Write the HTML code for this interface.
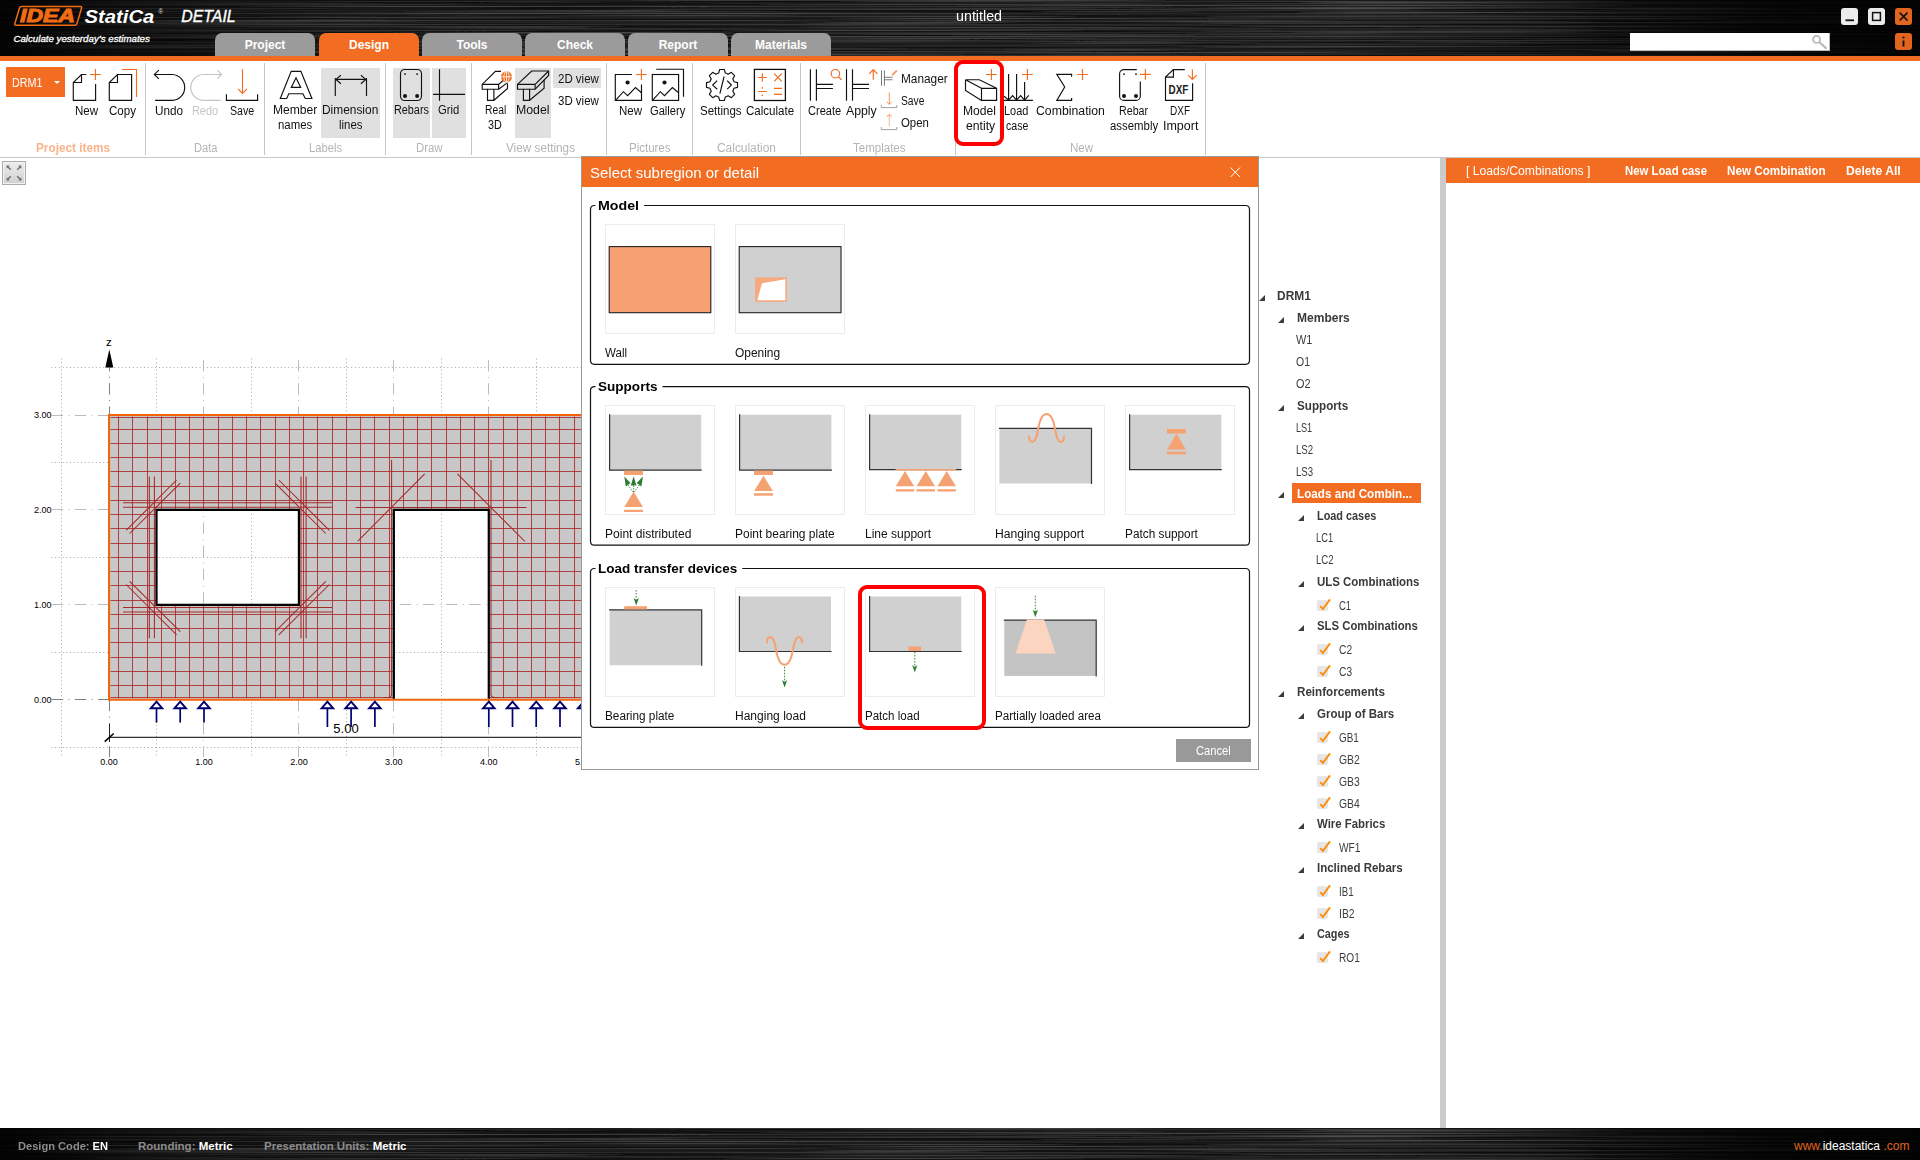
<!DOCTYPE html>
<html lang="en">
<head>
<meta charset="utf-8">
<title>IDEA StatiCa Detail - untitled</title>
<style>
*{box-sizing:border-box;margin:0;padding:0}
html,body{width:1920px;height:1160px;overflow:hidden;background:#fff}
body{font-family:"Liberation Sans",sans-serif;font-size:12px;color:#000;position:relative}
.abs{position:absolute}
#titlebar{position:absolute;left:0;top:0;width:1920px;height:56px;background:#262626;overflow:hidden}
#titlebar .tex,#status .tex{position:absolute;left:0;top:0;width:100%;height:100%;
 background:linear-gradient(90deg,rgba(0,0,0,.92) 0%,rgba(0,0,0,.55) 6%,rgba(0,0,0,.12) 18%,rgba(0,0,0,0) 35%,rgba(0,0,0,0) 70%,rgba(0,0,0,.35) 82%,rgba(0,0,0,.8) 92%,rgba(0,0,0,.92) 100%)}
#orange{position:absolute;left:0;top:56px;width:1920px;height:5px;background:#f26c21}
.tab{position:absolute;top:33px;width:100px;height:23px;background:#9b9b9b;border-radius:7px 7px 0 0;color:#fff;font-weight:bold;font-size:12px;text-align:center;line-height:24px}
.tab.on{background:#f26c21}
#ribbon{position:absolute;left:0;top:61px;width:1920px;height:97px;background:#fff;border-bottom:1px solid #c8c8c8}
.sep{position:absolute;top:63px;width:1px;height:92px;background:#c6c6c6}
.glabel{position:absolute;top:141px;font-size:12px;color:#b4b4b4;white-space:nowrap;transform:translateX(-50%)}
.rl{position:absolute;font-size:12px;white-space:nowrap;transform:translateX(-50%);text-align:center;line-height:15px;color:#111}
.hl{position:absolute;background:#e0e0e0}
svg{position:absolute;overflow:visible}
#status{position:absolute;left:0;top:1128px;width:1920px;height:32px;background:#222;overflow:hidden}
#status span{position:absolute;top:11.8px;font-size:11.5px;white-space:nowrap}
.tree{position:absolute;white-space:nowrap;font-size:12px;color:#333}
.tree.b{font-weight:bold;color:#3a3a3a}
.tri{position:absolute;width:0;height:0;border-left:6px solid transparent;border-bottom:6px solid #3c3c3c}
.cb{position:absolute;width:11px;height:11px;background:#e6e6e6;border-radius:2px}
</style>
</head>
<body>
<svg width="0" height="0" style="position:absolute"><defs><filter id="brush" x="0" y="0" width="100%" height="100%"><feTurbulence type="fractalNoise" baseFrequency="0.0025 0.75" numOctaves="2" seed="7" result="n"/><feColorMatrix in="n" type="matrix" values="0 0 0 0 0  0 0 0 0 0  0 0 0 0 0  -1.8 0 0 0 1.2" result="d"/><feColorMatrix in="n" type="matrix" values="0 0 0 0 1  0 0 0 0 1  0 0 0 0 1  0 0.3 0 0 -0.15" result="l"/><feMerge><feMergeNode in="d"/><feMergeNode in="l"/></feMerge></filter></defs></svg>
<div id="titlebar"><svg style="left:0;top:0" width="1920" height="56"><rect width="1920" height="56" filter="url(#brush)"/></svg><div class="tex"></div>
<svg style="left:0;top:0" width="260" height="56" viewBox="0 0 260 56">
 <path d="M21.6 6.6H80.4Q82 6.6 81.5 8.2L76.9 23.9Q76.5 25.3 75 25.3H16Q14.3 25.3 14.8 23.7L19.5 8Q19.9 6.6 21.6 6.6Z" fill="none" stroke="#f26c14" stroke-width="1.5"/>
 <text x="20" y="22.4" font-family="Liberation Sans, sans-serif" font-weight="bold" font-style="italic" font-size="18" fill="#f26c14" stroke="#f26c14" stroke-width="1.0" textLength="55" lengthAdjust="spacingAndGlyphs">IDEA</text>
 <text x="84.6" y="22.7" font-family="Liberation Sans, sans-serif" font-weight="bold" font-style="italic" font-size="19.2" fill="#fff" textLength="69.8" lengthAdjust="spacingAndGlyphs">StatiCa</text>
 <text x="158.3" y="13.6" font-family="Liberation Sans, sans-serif" font-size="6.5" fill="#ddd">®</text>
 <text x="181.2" y="22" font-family="Liberation Sans, sans-serif" font-style="italic" font-size="16.3" fill="#fff" stroke="#fff" stroke-width="0.35" textLength="54.5" lengthAdjust="spacingAndGlyphs">DETAIL</text>
 <text x="13.4" y="41.6" font-family="Liberation Sans, sans-serif" font-style="italic" font-size="9.2" fill="#fff" stroke="#fff" stroke-width="0.3" textLength="136.5" lengthAdjust="spacingAndGlyphs">Calculate yesterday’s estimates</text>
</svg>
<div class="abs" style="left:955.70px;top:6.60px;font-size:14px;color:#fff;white-space:nowrap;line-height:18px;transform-origin:0 0;transform:scaleX(1.0200);">untitled</div>
</div>
<div class="tab" style="left:215px">Project</div>
<div class="tab on" style="left:319px">Design</div>
<div class="tab" style="left:422px">Tools</div>
<div class="tab" style="left:525px">Check</div>
<div class="tab" style="left:628px">Report</div>
<div class="tab" style="left:731px">Materials</div>
<div id="orange"></div>
<div id="ribbon"></div>
<!-- window buttons / search -->
<div class="abs" style="left:1841px;top:8px;width:17px;height:17px;background:#ececec;border-radius:3px"></div>
<div class="abs" style="left:1868px;top:8px;width:17px;height:17px;background:#ececec;border-radius:3px"></div>
<div class="abs" style="left:1895px;top:8px;width:17px;height:17px;background:#e2651f;border-radius:3px"></div>
<div class="abs" style="left:1895px;top:33px;width:17px;height:17px;background:#e2651f;border-radius:3px"></div>
<div class="abs" style="left:1630px;top:33px;width:200px;height:18px;background:#fff;border-bottom:1px solid #bbb;border-right:1px solid #bbb"></div>
<svg style="left:0;top:0" width="1920" height="160" viewBox="0 0 1920 160" fill="none" stroke-linecap="butt">
 <g stroke="#111" stroke-width="1.8">
  <path d="M1845.5 20.3H1854"/>
  <rect x="1872.6" y="12.6" width="7.8" height="7.8" stroke-width="1.5"/>
  <path d="M1899.7 12.7l7.8 7.8M1907.5 12.7l-7.8 7.8" stroke-width="1.7"/>
  <path d="M1903.5 40.5v6" stroke-width="1.9"/><path d="M1903.5 36.6v1.9" stroke-width="1.9"/>
 </g>
 <g stroke="#b8b8b8" stroke-width="1.8"><circle cx="1816.6" cy="39.4" r="3.5"/><path d="M1819.2 42l7.3 6.6" stroke-width="2.2"/></g>
</svg>
<!-- highlights -->
<div class="hl" style="left:321px;top:68px;width:59px;height:70px"></div>
<div class="hl" style="left:393px;top:68px;width:37px;height:70px"></div>
<div class="hl" style="left:432px;top:68px;width:34px;height:70px"></div>
<div class="hl" style="left:515px;top:68px;width:36px;height:70px"></div>
<div class="hl" style="left:553px;top:68px;width:48px;height:20px"></div>
<!-- separators -->
<div class="sep" style="left:145px"></div><div class="sep" style="left:264px"></div><div class="sep" style="left:385px"></div>
<div class="sep" style="left:471px"></div><div class="sep" style="left:606px"></div><div class="sep" style="left:692px"></div>
<div class="sep" style="left:800px"></div><div class="sep" style="left:955px"></div><div class="sep" style="left:1205px"></div>
<!-- DRM1 combo -->
<div class="abs" style="left:6px;top:67px;width:59px;height:30px;background:#f26c21"></div>
<div class="abs" style="left:12.20px;top:74.80px;font-size:12.5px;color:#fff;white-space:nowrap;line-height:16px;transform-origin:0 0;transform:scaleX(0.8600);">DRM1</div>
<div class="abs" style="left:54.4px;top:80.8px;width:0;height:0;border-left:3.1px solid transparent;border-right:3.1px solid transparent;border-top:3.4px solid #fff"></div>
<svg style="left:0;top:0" width="1920" height="160" viewBox="0 0 1920 160" fill="none" stroke="#111" stroke-width="1.15" stroke-linejoin="miter">
 <!-- New doc -->
 <path d="M86.3 74.5H81.5L73.3 82.5V100.4H95.6V84"/><path d="M81.5 74.5V82.5H73.3"/>
 <path d="M95.4 69.1v10.8M90 74.5h10.8" stroke="#f26c21"/>
 <!-- Copy -->
 <path d="M117.5 74.5H131.6V100.4H109.3V82.5Z"/><path d="M117.5 74.5V82.5H109.3"/>
 <path d="M122 69.5H136.5V96.9" stroke="#f26c21"/>
 <!-- Undo -->
 <path d="M154.3 74.45H172.5A13 13 0 0 1 172.5 100.4H155.1"/><path d="M158.9 70.1L154.3 74.45L158.9 78.8"/>
 <!-- Redo -->
 <g stroke="#c4c4c4"><path d="M221.6 74.45H203A13 13 0 0 0 203 100.4H220.8"/><path d="M217.2 70.1L221.6 74.45L217.2 78.8"/></g>
 <!-- Save -->
 <path d="M226.4 94.2V100.4H257.6V94.2"/>
 <g stroke="#f26c21"><path d="M242.5 69.1V93.3"/><path d="M238 88.8L242.5 93.4L247 88.8"/></g>
 <!-- A -->
 <path d="M291.2 71.4H300.9L311.9 98.5H305.3L302.9 93.7H288.8L286.7 98.5H280.3Z"/><path d="M296 77.8L300.7 87.4H291.3Z"/>
 <!-- Dimension -->
 <path d="M335.3 78V96M366.5 78V96M335.6 79.4H366.2"/><path d="M340.9 75.2L336 79.4L340.9 83.7M360.9 75.2L365.8 79.4L360.9 83.7"/>
 <!-- Rebars -->
 <rect x="400.5" y="69.5" width="21" height="31" rx="4.2"/>
 <g fill="#111" stroke="none"><circle cx="405" cy="74.1" r="0.95"/><circle cx="417.1" cy="74.1" r="0.95"/><circle cx="405" cy="95.9" r="2"/><circle cx="417.1" cy="95.9" r="2"/></g>
 <!-- Grid -->
 <path d="M439.5 69.3V100.7M433.1 94.3H465"/>
 <!-- Real 3D -->
 <path d="M501 71.3H495.4L482.2 84.4V89.2H487.5V100.3H493.9L507.5 88.5V83.4"/><path d="M482.2 84.4H498.6V89.2H493.9V100.3M487.5 89.2H493.9"/><path d="M498.6 84.4L503.5 80.2M498.6 89.2L507.5 82.6"/>
 <circle cx="506.5" cy="76.8" r="5.5" fill="#f26c21" stroke="none"/>
 <g stroke="#fff" stroke-width="0.8"><path d="M501 76.8H512M506.5 71.3V82.3"/><ellipse cx="506.5" cy="76.8" rx="2.6" ry="5.4"/></g>
 <!-- Model -->
 <path d="M517.5 84.4L531.7 71H548.6V75.4L535.1 89.2H529.6V100.3H523.4V89.2H517.5Z"/><path d="M517.5 84.4H535.1V89.2M535.1 84.4L548.6 71M523.4 89.2H529.6"/><path d="M529.6 100.3L544.1 88.2V80"/>
 <!-- New picture -->
 <path d="M631.9 74.5H615.3V100.4H641.5V84.4"/><path d="M616 99.8L623.4 91.7L627.6 95.7L635.5 87.5L641.5 92.7"/>
 <circle cx="627.6" cy="82.5" r="2.1" fill="#111" stroke="none"/>
 <path d="M641.4 69.1v10.8M636 74.5h10.8" stroke="#f26c21"/>
 <!-- Gallery -->
 <rect x="652.3" y="74.5" width="26.3" height="25.9"/><path d="M653 99.8L660.3 91.7L664.5 95.7L672.4 87.5L678.6 92.7"/>
 <circle cx="664.5" cy="82.5" r="2.1" fill="#111" stroke="none"/>
 <path d="M656.2 69.2H683.5V96.8"/>
 <!-- Settings gear -->
 <path d="M718.69 73.05L719.65 69.48L724.35 69.48L725.31 73.05A12.4 12.4 0 0 1 728.11 74.21L728.11 74.21L731.32 72.36L734.64 75.68L732.79 78.89A12.4 12.4 0 0 1 733.95 81.69L733.95 81.69L737.52 82.65L737.52 87.35L733.95 88.31A12.4 12.4 0 0 1 732.79 91.11L732.79 91.11L734.64 94.32L731.32 97.64L728.11 95.79A12.4 12.4 0 0 1 725.31 96.95L725.31 96.95L724.35 100.52L719.65 100.52L718.69 96.95A12.4 12.4 0 0 1 715.89 95.79L715.89 95.79L712.68 97.64L709.36 94.32L711.21 91.11A12.4 12.4 0 0 1 710.05 88.31L710.05 88.31L706.48 87.35L706.48 82.65L710.05 81.69A12.4 12.4 0 0 1 711.21 78.89L711.21 78.89L709.36 75.68L712.68 72.36L715.89 74.21A12.4 12.4 0 0 1 718.69 73.05Z" stroke-linejoin="round"/>
 <path d="M717.2 80.6L712.7 85.1L717.2 89.2M724.1 76.5L719.9 93.7M727.2 80.6L731.4 85.1L727.2 89.2"/>
 <!-- Calculate -->
 <rect x="754.4" y="69.4" width="31" height="31.1" stroke-width="1.3"/>
 <g stroke="#f26c21"><path d="M762.3 73.2v8.6M758 77.5h8.6M774.2 73.7l7.6 7.6M781.8 73.7l-7.6 7.6M758.2 91.5h8.6M774 88.3h8M774 94.3h8"/>
 <circle cx="762.3" cy="87.9" r="0.8" fill="#f26c21" stroke="none"/><circle cx="762.3" cy="95.4" r="0.8" fill="#f26c21" stroke="none"/></g>
 <!-- Create -->
 <path d="M810.4 69.3V100.75M816.4 69.3V100.75M816.4 84.3H832.9M816.4 88.5H832.9"/>
 <g stroke="#f26c21"><circle cx="835.4" cy="73.7" r="4.2"/><path d="M838.3 76.7L841.7 79.7"/></g>
 <!-- Apply -->
 <path d="M846.5 69.3V100.75M852.5 69.3V100.75M852.5 84.3H869M852.5 88.5H869"/>
 <g stroke="#f26c21"><path d="M873.3 69.6V79.8M869.2 73.8L873.3 69.6L877.4 73.8"/></g>
 <!-- Manager/Save/Open small -->
 <g stroke="#555" stroke-width="0.8"><path d="M881.5 70.3V85.75M884.4 70.3V85.75M884.4 77.25H892.5M884.4 79.75H892.5"/></g>
 <path d="M892.6 74.6L896.3 71.2" stroke="#f26c21" stroke-width="1.6" stroke-linecap="round"/><path d="M892.6 74.6L896.3 71.2" stroke="#fff" stroke-width="0.5" stroke-linecap="round"/>
 <g stroke="#888" stroke-width="0.8"><path d="M881.3 105V107.6H896.8V105M881.3 127V129.6H896.8V127"/></g>
 <g stroke="#f58a4e" stroke-width="0.9"><path d="M889.3 92.4V104.3M886.8 101.8L889.3 104.4L891.8 101.8"/></g>
 <g stroke="#f9b896" stroke-width="1.1"><path d="M889.3 126.2V114.4M886.8 116.9L889.3 114.3L891.8 116.9"/></g>
 <!-- Model entity -->
 <path d="M981.5 88.3H996.6V100.4H981.5ZM965.5 79.7H979.3L996.6 88.3M965.5 79.7L981.5 88.3M965.5 79.7V90.5L981.5 100.4"/>
 <path d="M991.4 69.1v10.8M986 74.5h10.8" stroke="#f26c21"/>
 <!-- Load case -->
 <path d="M1008.6 74.1V100.4M1016.6 74.1V100.4M1024.6 81.9V100.4M1003.9 100.4H1032.9"/><path d="M1004.2 96.2L1008.6 100.2L1012.6 95.7L1016.6 100.2L1020.6 95.7L1024.6 100.2L1028.8 95.3"/>
 <path d="M1027.4 69.1v10.8M1022 74.5h10.8" stroke="#f26c21"/>
 <!-- Sigma -->
 <path d="M1071.6 76.8V74.3H1056.8L1064.7 87L1056.8 100.4H1071.6V97.9"/>
 <path d="M1082.5 69.1v10.8M1077.1 74.5h10.8" stroke="#f26c21"/>
 <!-- Rebar assembly -->
 <path d="M1136.8 69.6H1123.8A4.2 4.2 0 0 0 1119.6 73.8V96.2A4.2 4.2 0 0 0 1123.8 100.4H1136.1A4.2 4.2 0 0 0 1140.3 96.2V81.4"/>
 <g fill="#111" stroke="none"><circle cx="1124" cy="74.1" r="0.95"/><circle cx="1136" cy="74.1" r="0.95"/><circle cx="1124" cy="96.1" r="2"/><circle cx="1136" cy="96.1" r="2"/></g>
 <path d="M1145.4 69v10.8M1140 74.4h10.8" stroke="#f26c21"/>
 <!-- DXF -->
 <path d="M1184.8 69.6H1173.4L1165.5 77.1V100.4H1192.6V83.2"/><path d="M1173.4 69.6V77.1H1165.5"/>
 <text x="1168.6" y="93.5" font-family="Liberation Sans, sans-serif" font-weight="bold" font-size="13.5" fill="#222" stroke="none" textLength="19.8" lengthAdjust="spacingAndGlyphs">DXF</text>
 <g stroke="#f26c21"><path d="M1192.4 69.4V79.3M1188.1 75.1L1192.4 79.4L1196.7 75.1"/></g>
</svg>
<div class="abs" style="left:75.30px;top:103.70px;font-size:12px;color:#111;white-space:nowrap;line-height:15px;transform-origin:0 0;transform:scaleX(0.9627);">New</div>
<div class="abs" style="left:109.30px;top:103.70px;font-size:12px;color:#111;white-space:nowrap;line-height:15px;transform-origin:0 0;transform:scaleX(0.9639);">Copy</div>
<div class="abs" style="left:155.00px;top:103.70px;font-size:12px;color:#111;white-space:nowrap;line-height:15px;transform-origin:0 0;transform:scaleX(0.9780);">Undo</div>
<div class="abs" style="left:192.00px;top:103.70px;font-size:12px;color:#c6c6c6;white-space:nowrap;line-height:15px;transform-origin:0 0;transform:scaleX(0.9049);">Redo</div>
<div class="abs" style="left:229.60px;top:103.70px;font-size:12px;color:#111;white-space:nowrap;line-height:15px;transform-origin:0 0;transform:scaleX(0.8869);">Save</div>
<div class="abs" style="left:272.90px;top:102.70px;font-size:12px;color:#111;white-space:nowrap;line-height:15px;transform-origin:0 0;transform:scaleX(1.0075);">Member</div>
<div class="abs" style="left:278.20px;top:117.70px;font-size:12px;color:#111;white-space:nowrap;line-height:15px;transform-origin:0 0;transform:scaleX(0.9496);">names</div>
<div class="abs" style="left:321.90px;top:102.70px;font-size:12px;color:#111;white-space:nowrap;line-height:15px;transform-origin:0 0;transform:scaleX(0.9924);">Dimension</div>
<div class="abs" style="left:338.80px;top:117.70px;font-size:12px;color:#111;white-space:nowrap;line-height:15px;transform-origin:0 0;transform:scaleX(0.9522);">lines</div>
<div class="abs" style="left:393.80px;top:102.70px;font-size:12px;color:#111;white-space:nowrap;line-height:15px;transform-origin:0 0;transform:scaleX(0.9022);">Rebars</div>
<div class="abs" style="left:438.10px;top:102.70px;font-size:12px;color:#111;white-space:nowrap;line-height:15px;transform-origin:0 0;transform:scaleX(0.9377);">Grid</div>
<div class="abs" style="left:484.90px;top:102.70px;font-size:12px;color:#111;white-space:nowrap;line-height:15px;transform-origin:0 0;transform:scaleX(0.8600);">Real</div>
<div class="abs" style="left:488.40px;top:117.70px;font-size:12px;color:#111;white-space:nowrap;line-height:15px;transform-origin:0 0;transform:scaleX(0.9012);">3D</div>
<div class="abs" style="left:516.00px;top:102.70px;font-size:12px;color:#111;white-space:nowrap;line-height:15px;transform-origin:0 0;transform:scaleX(1.0259);">Model</div>
<div class="abs" style="left:619.30px;top:103.70px;font-size:12px;color:#111;white-space:nowrap;line-height:15px;transform-origin:0 0;transform:scaleX(0.9585);">New</div>
<div class="abs" style="left:650.20px;top:103.70px;font-size:12px;color:#111;white-space:nowrap;line-height:15px;transform-origin:0 0;transform:scaleX(0.9287);">Gallery</div>
<div class="abs" style="left:699.90px;top:103.70px;font-size:12px;color:#111;white-space:nowrap;line-height:15px;transform-origin:0 0;transform:scaleX(0.9595);">Settings</div>
<div class="abs" style="left:745.50px;top:103.70px;font-size:12px;color:#111;white-space:nowrap;line-height:15px;transform-origin:0 0;transform:scaleX(0.9626);">Calculate</div>
<div class="abs" style="left:808.30px;top:103.70px;font-size:12px;color:#111;white-space:nowrap;line-height:15px;transform-origin:0 0;transform:scaleX(0.9206);">Create</div>
<div class="abs" style="left:845.80px;top:103.70px;font-size:12px;color:#111;white-space:nowrap;line-height:15px;transform-origin:0 0;transform:scaleX(1.0228);">Apply</div>
<div class="abs" style="left:963.20px;top:103.70px;font-size:12px;color:#111;white-space:nowrap;line-height:15px;transform-origin:0 0;transform:scaleX(1.0106);">Model</div>
<div class="abs" style="left:966.20px;top:118.70px;font-size:12px;color:#111;white-space:nowrap;line-height:15px;transform-origin:0 0;transform:scaleX(1.0146);">entity</div>
<div class="abs" style="left:1004.30px;top:103.70px;font-size:12px;color:#111;white-space:nowrap;line-height:15px;transform-origin:0 0;transform:scaleX(0.9125);">Load</div>
<div class="abs" style="left:1006.10px;top:118.70px;font-size:12px;color:#111;white-space:nowrap;line-height:15px;transform-origin:0 0;transform:scaleX(0.8821);">case</div>
<div class="abs" style="left:1036.20px;top:103.70px;font-size:12px;color:#111;white-space:nowrap;line-height:15px;transform-origin:0 0;transform:scaleX(1.0235);">Combination</div>
<div class="abs" style="left:1119.40px;top:103.70px;font-size:12px;color:#111;white-space:nowrap;line-height:15px;transform-origin:0 0;transform:scaleX(0.8914);">Rebar</div>
<div class="abs" style="left:1110.10px;top:118.70px;font-size:12px;color:#111;white-space:nowrap;line-height:15px;transform-origin:0 0;transform:scaleX(0.9491);">assembly</div>
<div class="abs" style="left:1170.30px;top:103.70px;font-size:12px;color:#111;white-space:nowrap;line-height:15px;transform-origin:0 0;transform:scaleX(0.8337);">DXF</div>
<div class="abs" style="left:1163.10px;top:118.70px;font-size:12px;color:#111;white-space:nowrap;line-height:15px;transform-origin:0 0;transform:scaleX(1.0402);">Import</div>
<div class="abs" style="left:901.10px;top:71.90px;font-size:12px;color:#111;white-space:nowrap;line-height:15px;transform-origin:0 0;transform:scaleX(0.9869);">Manager</div>
<div class="abs" style="left:901.10px;top:94.10px;font-size:12px;color:#111;white-space:nowrap;line-height:15px;transform-origin:0 0;transform:scaleX(0.8577);">Save</div>
<div class="abs" style="left:901.10px;top:116.10px;font-size:12px;color:#111;white-space:nowrap;line-height:15px;transform-origin:0 0;transform:scaleX(0.9490);">Open</div>
<div class="abs" style="left:557.50px;top:71.90px;font-size:12px;color:#111;white-space:nowrap;line-height:15px;transform-origin:0 0;transform:scaleX(0.9562);">2D view</div>
<div class="abs" style="left:557.50px;top:94.00px;font-size:12px;color:#111;white-space:nowrap;line-height:15px;transform-origin:0 0;transform:scaleX(0.9562);">3D view</div>
<div class="abs" style="left:35.60px;top:140.60px;font-size:12px;color:#f9b48c;white-space:nowrap;line-height:15px;transform-origin:0 0;transform:scaleX(0.9813);font-weight:bold;">Project items</div>
<div class="abs" style="left:193.90px;top:140.60px;font-size:12px;color:#b4b4b4;white-space:nowrap;line-height:15px;transform-origin:0 0;transform:scaleX(0.9215);">Data</div>
<div class="abs" style="left:308.90px;top:140.60px;font-size:12px;color:#b4b4b4;white-space:nowrap;line-height:15px;transform-origin:0 0;transform:scaleX(0.9333);">Labels</div>
<div class="abs" style="left:416.30px;top:140.60px;font-size:12px;color:#b4b4b4;white-space:nowrap;line-height:15px;transform-origin:0 0;transform:scaleX(0.9468);">Draw</div>
<div class="abs" style="left:505.60px;top:140.60px;font-size:12px;color:#b4b4b4;white-space:nowrap;line-height:15px;transform-origin:0 0;transform:scaleX(0.9790);">View settings</div>
<div class="abs" style="left:629.00px;top:140.60px;font-size:12px;color:#b4b4b4;white-space:nowrap;line-height:15px;transform-origin:0 0;transform:scaleX(0.9574);">Pictures</div>
<div class="abs" style="left:717.20px;top:140.60px;font-size:12px;color:#b4b4b4;white-space:nowrap;line-height:15px;transform-origin:0 0;transform:scaleX(0.9931);">Calculation</div>
<div class="abs" style="left:853.10px;top:140.60px;font-size:12px;color:#b4b4b4;white-space:nowrap;line-height:15px;transform-origin:0 0;transform:scaleX(0.9600);">Templates</div>
<div class="abs" style="left:1070.30px;top:140.60px;font-size:12px;color:#b4b4b4;white-space:nowrap;line-height:15px;transform-origin:0 0;transform:scaleX(0.9585);">New</div>
<div class="abs" style="left:2px;top:161px;width:24px;height:24px;border:1px solid #ababab;background:linear-gradient(#eeeeee,#d0d0d0);box-shadow:inset 0 0 0 1px #f2f2f2"></div>
<svg style="left:0;top:158px" width="1440" height="970" viewBox="0 158 1440 970" fill="none">
<g stroke="#6a6a6a" stroke-width="1.3" fill="#6a6a6a">
<path d="M10.8 169.8L7.2 166.2" />
<path d="M6.6 165.6L9.8 165.6L6.6 168.8Z" stroke="none"/>
<path d="M17.2 169.8L20.8 166.2" />
<path d="M21.4 165.6L18.2 165.6L21.4 168.8Z" stroke="none"/>
<path d="M10.8 176.2L7.2 179.8" />
<path d="M6.6 180.4L9.8 180.4L6.6 177.2Z" stroke="none"/>
<path d="M17.2 176.2L20.8 179.8" />
<path d="M21.4 180.4L18.2 180.4L21.4 177.2Z" stroke="none"/>
</g>
<defs><clipPath id="cv"><rect x="0" y="158" width="581" height="970"/></clipPath>
<clipPath id="wc"><path clip-rule="evenodd" d="M109.05 415.01H583.70V699.80H109.05Z M156.51 509.94H298.91V604.87H156.51Z M393.84 509.94H488.77V699.80H393.84Z"/></clipPath></defs>
<g clip-path="url(#cv)">
<g stroke="#a6a6a6" stroke-width="1" stroke-dasharray="1 2.7">
<path d="M61.50 358.5V757.5"/>
<path d="M156.50 358.5V757.5"/>
<path d="M251.50 358.5V757.5"/>
<path d="M346.50 358.5V757.5"/>
<path d="M441.50 358.5V757.5"/>
<path d="M536.50 358.5V757.5"/>
<path d="M631.50 358.5V757.5"/>
<path d="M51.5 747.50H640"/>
<path d="M51.5 652.50H640"/>
<path d="M51.5 557.50H640"/>
<path d="M51.5 462.50H640"/>
<path d="M51.5 367.50H640"/>
</g>
<g stroke="#bcbcbc" stroke-width="1" stroke-dasharray="11.35 5.5 1 5.35">
<path d="M203.50 360.05V699"/><path d="M203.50 699.8V757"/>
<path d="M298.50 360.05V699"/><path d="M298.50 699.8V757"/>
<path d="M393.50 360.05V699"/><path d="M393.50 699.8V757"/>
<path d="M488.50 360.05V699"/><path d="M488.50 699.8V757"/>
<path d="M583.50 360.05V699"/><path d="M583.50 699.8V757"/>
<path d="M51.7 604.50H640"/>
<path d="M51.7 509.50H640"/>
<path d="M51.7 415.50H640"/>
</g>
<g stroke="#808080" stroke-width="1" stroke-dasharray="11.35 5.5 1 5.35">
<path d="M109.5 367.5V414" stroke-dashoffset="7.45"/><path d="M109.5 699.8V757"/>
<path d="M51.7 699.5H640"/>
</g>
<path fill-rule="evenodd" fill="#c8c8c8" d="M109.05 415.01H583.70V699.80H109.05Z M156.51 509.94H298.91V604.87H156.51Z M393.84 509.94H488.77V699.80H393.84Z"/>
<g clip-path="url(#wc)" stroke="#a82828" stroke-opacity="0.85" stroke-width="1">
<path d="M118.50 416.51V698.30"/>
<path d="M132.50 416.51V698.30"/>
<path d="M147.50 416.51V698.30"/>
<path d="M161.50 416.51V698.30"/>
<path d="M175.50 416.51V698.30"/>
<path d="M189.50 416.51V698.30"/>
<path d="M203.50 416.51V698.30"/>
<path d="M218.50 416.51V698.30"/>
<path d="M232.50 416.51V698.30"/>
<path d="M246.50 416.51V698.30"/>
<path d="M260.50 416.51V698.30"/>
<path d="M275.50 416.51V698.30"/>
<path d="M289.50 416.51V698.30"/>
<path d="M303.50 416.51V698.30"/>
<path d="M317.50 416.51V698.30"/>
<path d="M332.50 416.51V698.30"/>
<path d="M346.50 416.51V698.30"/>
<path d="M360.50 416.51V698.30"/>
<path d="M374.50 416.51V698.30"/>
<path d="M389.50 416.51V698.30"/>
<path d="M403.50 416.51V698.30"/>
<path d="M417.50 416.51V698.30"/>
<path d="M431.50 416.51V698.30"/>
<path d="M446.50 416.51V698.30"/>
<path d="M460.50 416.51V698.30"/>
<path d="M474.50 416.51V698.30"/>
<path d="M488.50 416.51V698.30"/>
<path d="M503.50 416.51V698.30"/>
<path d="M517.50 416.51V698.30"/>
<path d="M531.50 416.51V698.30"/>
<path d="M545.50 416.51V698.30"/>
<path d="M559.50 416.51V698.30"/>
<path d="M574.50 416.51V698.30"/>
<path d="M110.55 685.50H582.20"/>
<path d="M110.55 671.50H582.20"/>
<path d="M110.55 657.50H582.20"/>
<path d="M110.55 642.50H582.20"/>
<path d="M110.55 628.50H582.20"/>
<path d="M110.55 614.50H582.20"/>
<path d="M110.55 600.50H582.20"/>
<path d="M110.55 585.50H582.20"/>
<path d="M110.55 571.50H582.20"/>
<path d="M110.55 557.50H582.20"/>
<path d="M110.55 543.50H582.20"/>
<path d="M110.55 528.50H582.20"/>
<path d="M110.55 514.50H582.20"/>
<path d="M110.55 500.50H582.20"/>
<path d="M110.55 486.50H582.20"/>
<path d="M110.55 471.50H582.20"/>
<path d="M110.55 457.50H582.20"/>
<path d="M110.55 443.50H582.20"/>
<path d="M110.55 429.50H582.20"/>
<path d="M110.55 417.5H583.70M110.55 697.5H583.70"/>
</g>
<g stroke="#a52a2a" stroke-width="1.05">
<path d="M123 502.8H332M123 612.0H332"/>
<path d="M123 507.3H332M123 607.5H332"/>
<path d="M149.3 476.5V638.3M306.1 476.5V638.3"/>
<path d="M154.4 476.5V638.3M301.0 476.5V638.3"/>
<path d="M126.1 530.3L176.6 480.0"/>
<path d="M329.3 530.3L278.8 480.0"/>
<path d="M126.1 584.5L176.6 634.8"/>
<path d="M329.3 584.5L278.8 634.8"/>
<path d="M129.6 533.5L180.3 483.2"/>
<path d="M325.8 533.5L275.1 483.2"/>
<path d="M129.6 581.3L180.3 631.6"/>
<path d="M325.8 581.3L275.1 631.6"/>
<path d="M355.5 507.5H526.6"/>
<path d="M391.6 460V694Q391.6 697.5 388 697.5H384"/>
<path d="M491 460V694Q491 697.5 494.6 697.5H498"/>
<path d="M357.8 541.1L424.7 473.9M457.4 473.9L524.9 541.5"/>
</g>
<path fill="none" stroke="#f5640a" stroke-width="2.1" d="M109.05 415.01H583.70V699.80H109.05Z"/>
<path fill="none" stroke="#000" stroke-width="2.2" d="M156.51 509.94H298.91V604.87H156.51Z"/>
<path fill="none" stroke="#000" stroke-width="2.2" d="M393.84 698.80V509.94H488.77V698.80"/>
<path d="M109.3 349.4L113.3 367.5H105.3Z" fill="#000"/>
<text x="106" y="345.8" font-family="Liberation Sans, sans-serif" font-size="11.5" fill="#000">z</text>
<g font-family="Liberation Sans, sans-serif" font-size="9" fill="#000">
<text x="51.5" y="418.2" text-anchor="end">3.00</text>
<text x="51.5" y="513.1" text-anchor="end">2.00</text>
<text x="51.5" y="608.1" text-anchor="end">1.00</text>
<text x="51.5" y="703.0" text-anchor="end">0.00</text>
<text x="109.0" y="764.8" text-anchor="middle">0.00</text>
<text x="204.0" y="764.8" text-anchor="middle">1.00</text>
<text x="298.9" y="764.8" text-anchor="middle">2.00</text>
<text x="393.8" y="764.8" text-anchor="middle">3.00</text>
<text x="488.8" y="764.8" text-anchor="middle">4.00</text>
<text x="583.7" y="764.8" text-anchor="middle">5.00</text>
</g>
<g stroke="#00006e" stroke-width="1.9" fill="#fff">
<path d="M156.5 708.5V722.6" stroke-width="1.7"/><path d="M156.5 701.6L162.3 708.3H150.7Z"/>
<path d="M180.2 708.5V722.6" stroke-width="1.7"/><path d="M180.2 701.6L186.0 708.3H174.4Z"/>
<path d="M204.0 708.5V722.6" stroke-width="1.7"/><path d="M204.0 701.6L209.8 708.3H198.2Z"/>
<path d="M327.4 708.5V727.0" stroke-width="1.7"/><path d="M327.4 701.6L333.2 708.3H321.6Z"/>
<path d="M351.1 708.5V727.0" stroke-width="1.7"/><path d="M351.1 701.6L356.9 708.3H345.3Z"/>
<path d="M374.9 708.5V727.0" stroke-width="1.7"/><path d="M374.9 701.6L380.7 708.3H369.1Z"/>
<path d="M488.8 708.5V727.0" stroke-width="1.7"/><path d="M488.8 701.6L494.6 708.3H483.0Z"/>
<path d="M512.5 708.5V727.0" stroke-width="1.7"/><path d="M512.5 701.6L518.3 708.3H506.7Z"/>
<path d="M536.2 708.5V727.0" stroke-width="1.7"/><path d="M536.2 701.6L542.0 708.3H530.4Z"/>
<path d="M560.0 708.5V727.0" stroke-width="1.7"/><path d="M560.0 701.6L565.8 708.3H554.2Z"/>
<path d="M583.7 708.5V727.0" stroke-width="1.7"/><path d="M583.7 701.6L589.5 708.3H577.9Z"/>
</g>
<path d="M109.3 737.3H583" stroke="#000" stroke-width="1"/>
<path d="M109.5 724V742" stroke="#222" stroke-width="1"/>
<path d="M104.7 741.7L113.7 733.5" stroke="#000" stroke-width="1.6"/>
<text x="346" y="732.8" font-family="Liberation Sans, sans-serif" font-size="13" fill="#000" text-anchor="middle">5.00</text>
</g></svg>
<div class="abs" style="left:581px;top:156px;width:678px;height:614px;background:#fff;border:1px solid #9a9a9a"></div>
<div class="abs" style="left:582px;top:157px;width:676px;height:30px;background:#f26c21"></div>
<div class="abs" style="left:590.40px;top:162.90px;font-size:15px;color:#fff;white-space:nowrap;line-height:19px;transform-origin:0 0;transform:scaleX(0.9987);">Select subregion or detail</div>
<svg style="left:1229px;top:166px" width="13" height="13" viewBox="0 0 13 13"><path d="M1.5 1.5L11 11M11 1.5L1.5 11" stroke="#fff" stroke-width="1"/></svg>
<svg style="left:0;top:0" width="1920" height="1160" viewBox="0 0 1920 1160"><path d="M595.5 205.5H594.5Q590.5 205.5 590.5 209.5V360.3Q590.5 364.3 594.5 364.3H1245.5Q1249.5 364.3 1249.5 360.3V209.5Q1249.5 205.5 1245.5 205.5H644.1" fill="none" stroke="#111" stroke-width="1.2"/></svg>
<div class="abs" style="left:598.30px;top:197.70px;font-size:13px;color:#000;white-space:nowrap;line-height:16px;transform-origin:0 0;transform:scaleX(1.0937);font-weight:bold;">Model</div>
<svg style="left:0;top:0" width="1920" height="1160" viewBox="0 0 1920 1160"><path d="M595.5 386.7H594.5Q590.5 386.7 590.5 390.7V541.2Q590.5 545.2 594.5 545.2H1245.5Q1249.5 545.2 1249.5 541.2V390.7Q1249.5 386.7 1245.5 386.7H662.5" fill="none" stroke="#111" stroke-width="1.2"/></svg>
<div class="abs" style="left:598.30px;top:378.90px;font-size:13px;color:#000;white-space:nowrap;line-height:16px;transform-origin:0 0;transform:scaleX(1.0420);font-weight:bold;">Supports</div>
<svg style="left:0;top:0" width="1920" height="1160" viewBox="0 0 1920 1160"><path d="M595.5 568.5H594.5Q590.5 568.5 590.5 572.5V723.4Q590.5 727.4 594.5 727.4H1245.5Q1249.5 727.4 1249.5 723.4V572.5Q1249.5 568.5 1245.5 568.5H742.3" fill="none" stroke="#111" stroke-width="1.2"/></svg>
<div class="abs" style="left:598.30px;top:560.70px;font-size:13px;color:#000;white-space:nowrap;line-height:16px;transform-origin:0 0;transform:scaleX(1.0363);font-weight:bold;">Load transfer devices</div>
<div class="abs" style="left:605px;top:224px;width:110px;height:110px;border:1px solid #ececec"></div>
<svg style="left:605px;top:224px" width="110" height="110" viewBox="0 0 110 110" fill="none"><rect x="4.2" y="22.6" width="101.6" height="66.1" fill="#f7a172" stroke="#222" stroke-width="1.1"/></svg>
<div class="abs" style="left:604.80px;top:345.60px;font-size:12px;color:#111;white-space:nowrap;line-height:15px;transform-origin:0 0;transform:scaleX(0.9623);">Wall</div>
<div class="abs" style="left:735px;top:224px;width:110px;height:110px;border:1px solid #ececec"></div>
<svg style="left:735px;top:224px" width="110" height="110" viewBox="0 0 110 110" fill="none"><rect x="4.2" y="22.6" width="101.8" height="66.1" fill="#d0d0d0" stroke="#222" stroke-width="1.1"/><rect x="20.1" y="53.4" width="31.7" height="24.4" fill="#f7a97e"/><path d="M27 59.3L50.3 55.2V76.3H22.3Z" fill="#fff"/></svg>
<div class="abs" style="left:734.80px;top:345.60px;font-size:12px;color:#111;white-space:nowrap;line-height:15px;transform-origin:0 0;transform:scaleX(0.9953);">Opening</div>
<div class="abs" style="left:605px;top:405px;width:110px;height:110px;border:1px solid #ececec"></div>
<svg style="left:605px;top:405px" width="110" height="110" viewBox="0 0 110 110" fill="none"><rect x="4.6" y="9.7" width="91.6" height="55.5" fill="#d0d0d0"/><path d="M4.6 9.2V65.8M4.0 65.2H96.7" stroke="#333" stroke-width="1.2"/><rect x="19.0" y="65.6" width="19.0" height="4.4" fill="#f5a272"/><path d="M28.6 86.5L37.9 102.0H19.3Z" fill="#f5a272"/><rect x="19.0" y="104.8" width="19.0" height="2.2" fill="#f5a272"/><g fill="#2f7d32"><path d="M19.3 71.5L25.5 78L20.8 81.5Z"/><path d="M28.6 71.3L31.4 80.5H25.8Z"/><path d="M37.9 71.5L31.7 78L36.4 81.5Z"/></g><g stroke="#3c8a3c" stroke-width="1" stroke-dasharray="1.3 1.3"><path d="M23 80L28 87M28.6 80.5V87M34.2 80L29.2 87"/></g></svg>
<div class="abs" style="left:604.80px;top:526.60px;font-size:12px;color:#111;white-space:nowrap;line-height:15px;transform-origin:0 0;transform:scaleX(1.0036);">Point distributed</div>
<div class="abs" style="left:735px;top:405px;width:110px;height:110px;border:1px solid #ececec"></div>
<svg style="left:735px;top:405px" width="110" height="110" viewBox="0 0 110 110" fill="none"><rect x="4.6" y="9.7" width="91.8" height="55.5" fill="#d0d0d0"/><path d="M4.6 9.2V65.8M4.0 65.2H96.9" stroke="#333" stroke-width="1.2"/><rect x="19.0" y="65.6" width="19.0" height="4.4" fill="#f5a272"/><path d="M28.5 70.7L37.8 85.9H19.2Z" fill="#f5a272"/><rect x="19.0" y="88.2" width="19.0" height="2.5" fill="#f5a272"/></svg>
<div class="abs" style="left:734.80px;top:526.60px;font-size:12px;color:#111;white-space:nowrap;line-height:15px;transform-origin:0 0;transform:scaleX(0.9969);">Point bearing plate</div>
<div class="abs" style="left:865px;top:405px;width:110px;height:110px;border:1px solid #ececec"></div>
<svg style="left:865px;top:405px" width="110" height="110" viewBox="0 0 110 110" fill="none"><rect x="4.6" y="9.7" width="91.7" height="55.0" fill="#d0d0d0"/><path d="M4.6 9.2V65.3M4.0 64.7H96.8" stroke="#333" stroke-width="1.2"/><path d="M30.6 64.7H91" stroke="#f5a272" stroke-width="1.4"/><path d="M40.0 66.0L49.2 81.3H30.8Z" fill="#f5a272"/><rect x="30.8" y="84.2" width="18.4" height="2.3" fill="#f5a272"/><path d="M60.8 66.0L70.0 81.3H51.6Z" fill="#f5a272"/><rect x="51.6" y="84.2" width="18.4" height="2.3" fill="#f5a272"/><path d="M81.7 66.0L90.9 81.3H72.5Z" fill="#f5a272"/><rect x="72.5" y="84.2" width="18.4" height="2.3" fill="#f5a272"/></svg>
<div class="abs" style="left:864.80px;top:526.60px;font-size:12px;color:#111;white-space:nowrap;line-height:15px;transform-origin:0 0;transform:scaleX(1.0005);">Line support</div>
<div class="abs" style="left:995px;top:405px;width:110px;height:110px;border:1px solid #ececec"></div>
<svg style="left:995px;top:405px" width="110" height="110" viewBox="0 0 110 110" fill="none"><rect x="4.4" y="23.3" width="92.1" height="55.2" fill="#d0d0d0"/><path d="M3.9 23.3H97.1M96.5 22.7V79.0" stroke="#333" stroke-width="1.2"/><path d="M34 30.6C34 35 35 36.9 37.1 36.9C41 36.9 42 30 43.3 23.3C45 14 48 9.1 51.6 9.1C55.2 9.1 58.2 14 59.9 23.3C61.2 30 62.2 36.9 66 36.9C68.1 36.9 69.1 35 69.1 30.6" stroke="#f5a272" stroke-width="2"/></svg>
<div class="abs" style="left:994.80px;top:526.60px;font-size:12px;color:#111;white-space:nowrap;line-height:15px;transform-origin:0 0;transform:scaleX(1.0127);">Hanging support</div>
<div class="abs" style="left:1125px;top:405px;width:110px;height:110px;border:1px solid #ececec"></div>
<svg style="left:1125px;top:405px" width="110" height="110" viewBox="0 0 110 110" fill="none"><rect x="4.6" y="9.7" width="91.7" height="55.0" fill="#d0d0d0"/><path d="M4.6 9.2V65.3M4.0 64.7H96.8" stroke="#333" stroke-width="1.2"/><rect x="42.0" y="24.0" width="18.8" height="4.5" fill="#f5a272"/><path d="M51.5 28.5L60.8 44.6H42.2Z" fill="#f5a272"/><rect x="42.0" y="46.7" width="18.8" height="2.7" fill="#f5a272"/></svg>
<div class="abs" style="left:1124.80px;top:526.60px;font-size:12px;color:#111;white-space:nowrap;line-height:15px;transform-origin:0 0;transform:scaleX(0.9843);">Patch support</div>
<div class="abs" style="left:605px;top:587px;width:110px;height:110px;border:1px solid #ececec"></div>
<svg style="left:605px;top:587px" width="110" height="110" viewBox="0 0 110 110" fill="none"><rect x="4.6" y="22.8" width="92.1" height="55.4" fill="#d0d0d0"/><path d="M4.1 22.8H97.3M96.7 22.2V78.7" stroke="#333" stroke-width="1.2"/><rect x="19.2" y="19.2" width="22.8" height="3.2" fill="#f5a272"/><path d="M31.2 3.0V13.6" stroke="#3c8a3c" stroke-width="1" stroke-dasharray="1.6 1.4"/><path d="M31.2 18.6L28.6 11.1L31.2 13.1L33.9 11.1Z" fill="#2f7d32"/></svg>
<div class="abs" style="left:604.80px;top:708.60px;font-size:12px;color:#111;white-space:nowrap;line-height:15px;transform-origin:0 0;transform:scaleX(0.9808);">Bearing plate</div>
<div class="abs" style="left:735px;top:587px;width:110px;height:110px;border:1px solid #ececec"></div>
<svg style="left:735px;top:587px" width="110" height="110" viewBox="0 0 110 110" fill="none"><rect x="4.4" y="9.5" width="91.6" height="55.0" fill="#d0d0d0"/><path d="M4.4 9.0V65.1M3.8 64.5H96.5" stroke="#333" stroke-width="1.2"/><path d="M31.9 56.3 C31.9 51.9 32.9 50.0 35.0 50.0 C38.9 50.0 39.9 56.9 41.2 63.6 C42.9 72.9 45.9 77.8 49.5 77.8 C53.1 77.8 56.1 72.9 57.8 63.6 C59.1 56.9 60.1 50.0 63.9 50.0 C66.0 50.0 67.0 51.9 67.0 56.3" stroke="#f5a272" stroke-width="2"/><path d="M49.6 79.7V95.5" stroke="#3c8a3c" stroke-width="1" stroke-dasharray="1.6 1.4"/><path d="M49.6 100.5L47.0 93.0L49.6 95.0L52.2 93.0Z" fill="#2f7d32"/></svg>
<div class="abs" style="left:734.80px;top:708.60px;font-size:12px;color:#111;white-space:nowrap;line-height:15px;transform-origin:0 0;transform:scaleX(1.0019);">Hanging load</div>
<div class="abs" style="left:865px;top:587px;width:110px;height:110px;border:1px solid #ececec"></div>
<svg style="left:865px;top:587px" width="110" height="110" viewBox="0 0 110 110" fill="none"><rect x="4.6" y="9.5" width="91.7" height="55.0" fill="#d0d0d0"/><path d="M4.6 9.0V65.1M4.0 64.5H96.8" stroke="#333" stroke-width="1.2"/><rect x="43.5" y="59.5" width="12.5" height="4.5" fill="#f5a272"/><path d="M49.8 65.0V80.5" stroke="#3c8a3c" stroke-width="1" stroke-dasharray="1.6 1.4"/><path d="M49.8 85.5L47.2 78.0L49.8 80.0L52.4 78.0Z" fill="#2f7d32"/></svg>
<div class="abs" style="left:864.80px;top:708.60px;font-size:12px;color:#111;white-space:nowrap;line-height:15px;transform-origin:0 0;transform:scaleX(0.9621);">Patch load</div>
<div class="abs" style="left:995px;top:587px;width:110px;height:110px;border:1px solid #ececec"></div>
<svg style="left:995px;top:587px" width="110" height="110" viewBox="0 0 110 110" fill="none"><rect x="9.3" y="33.2" width="91.9" height="55.7" fill="#c4c4c4"/><path d="M8.8 33.2H101.8M101.2 32.6V89.4" stroke="#333" stroke-width="1.2"/><path d="M31.9 32.5H49.1L60.7 66.4H20.5Z" fill="#fbd5bf"/><path d="M40.3 8.7V25.2" stroke="#3c8a3c" stroke-width="1" stroke-dasharray="1.6 1.4"/><path d="M40.3 30.2L37.7 22.7L40.3 24.7L42.9 22.7Z" fill="#2f7d32"/></svg>
<div class="abs" style="left:994.80px;top:708.60px;font-size:12px;color:#111;white-space:nowrap;line-height:15px;transform-origin:0 0;transform:scaleX(0.9686);">Partially loaded area</div>
<div class="abs" style="left:858px;top:585px;width:128px;height:145px;border:4px solid #ff0000;border-radius:9px"></div>
<div class="abs" style="left:1176px;top:739px;width:75px;height:23px;background:#999"></div>
<div class="abs" style="left:1196.00px;top:743.60px;font-size:12px;color:#fff;white-space:nowrap;line-height:15px;transform-origin:0 0;transform:scaleX(0.9323);">Cancel</div>
<div class="abs" style="left:954px;top:60px;width:50px;height:86px;border:4px solid #ff0000;border-radius:9px"></div>
<div class="abs" style="left:1276.90px;top:289.10px;font-size:12px;color:#3a3a3a;white-space:nowrap;line-height:15px;transform-origin:0 0;transform:scaleX(0.9956);font-weight:bold;">DRM1</div>
<div class="tri" style="left:1258.5px;top:294.5px"></div>
<div class="abs" style="left:1296.80px;top:311.10px;font-size:12px;color:#3a3a3a;white-space:nowrap;line-height:15px;transform-origin:0 0;transform:scaleX(1.0013);font-weight:bold;">Members</div>
<div class="tri" style="left:1278.0px;top:316.5px"></div>
<div class="abs" style="left:1296.20px;top:333.10px;font-size:12px;color:#3c3c3c;white-space:nowrap;line-height:15px;transform-origin:0 0;transform:scaleX(0.9087);">W1</div>
<div class="abs" style="left:1296.20px;top:355.10px;font-size:12px;color:#3c3c3c;white-space:nowrap;line-height:15px;transform-origin:0 0;transform:scaleX(0.8721);">O1</div>
<div class="abs" style="left:1296.20px;top:377.10px;font-size:12px;color:#3c3c3c;white-space:nowrap;line-height:15px;transform-origin:0 0;transform:scaleX(0.9094);">O2</div>
<div class="abs" style="left:1296.80px;top:399.10px;font-size:12px;color:#3a3a3a;white-space:nowrap;line-height:15px;transform-origin:0 0;transform:scaleX(0.9714);font-weight:bold;">Supports</div>
<div class="tri" style="left:1278.0px;top:404.5px"></div>
<div class="abs" style="left:1296.40px;top:421.10px;font-size:12px;color:#3c3c3c;white-space:nowrap;line-height:15px;transform-origin:0 0;transform:scaleX(0.7571);">LS1</div>
<div class="abs" style="left:1296.40px;top:443.10px;font-size:12px;color:#3c3c3c;white-space:nowrap;line-height:15px;transform-origin:0 0;transform:scaleX(0.8038);">LS2</div>
<div class="abs" style="left:1296.40px;top:465.10px;font-size:12px;color:#3c3c3c;white-space:nowrap;line-height:15px;transform-origin:0 0;transform:scaleX(0.8038);">LS3</div>
<div class="abs" style="left:1292px;top:482.5px;width:129px;height:20px;background:#f26c21"></div>
<div class="abs" style="left:1296.80px;top:487.10px;font-size:12px;color:#fff;white-space:nowrap;line-height:15px;transform-origin:0 0;transform:scaleX(0.9736);font-weight:bold;">Loads and Combin...</div>
<div class="tri" style="left:1278px;top:492.1px"></div>
<div class="abs" style="left:1317.00px;top:509.10px;font-size:12px;color:#3a3a3a;white-space:nowrap;line-height:15px;transform-origin:0 0;transform:scaleX(0.9066);font-weight:bold;">Load cases</div>
<div class="tri" style="left:1298.0px;top:514.5px"></div>
<div class="abs" style="left:1316.40px;top:531.10px;font-size:12px;color:#3c3c3c;white-space:nowrap;line-height:15px;transform-origin:0 0;transform:scaleX(0.7752);">LC1</div>
<div class="abs" style="left:1316.40px;top:553.10px;font-size:12px;color:#3c3c3c;white-space:nowrap;line-height:15px;transform-origin:0 0;transform:scaleX(0.8024);">LC2</div>
<div class="abs" style="left:1317.00px;top:575.10px;font-size:12px;color:#3a3a3a;white-space:nowrap;line-height:15px;transform-origin:0 0;transform:scaleX(0.9546);font-weight:bold;">ULS Combinations</div>
<div class="tri" style="left:1298.0px;top:580.5px"></div>
<div class="cb" style="left:1317.2px;top:600.0px"></div>
<svg style="left:1316px;top:596.0px" width="16" height="16" viewBox="0 0 16 16"><path d="M4.2 10.2L6.9 13.1L14 3.4" fill="none" stroke="#ff8c0a" stroke-width="1.9"/></svg>
<div class="abs" style="left:1339.00px;top:598.60px;font-size:12px;color:#3c3c3c;white-space:nowrap;line-height:15px;transform-origin:0 0;transform:scaleX(0.7929);">C1</div>
<div class="abs" style="left:1317.00px;top:619.10px;font-size:12px;color:#3a3a3a;white-space:nowrap;line-height:15px;transform-origin:0 0;transform:scaleX(0.9455);font-weight:bold;">SLS Combinations</div>
<div class="tri" style="left:1298.0px;top:624.5px"></div>
<div class="cb" style="left:1317.2px;top:644.0px"></div>
<svg style="left:1316px;top:640.0px" width="16" height="16" viewBox="0 0 16 16"><path d="M4.2 10.2L6.9 13.1L14 3.4" fill="none" stroke="#ff8c0a" stroke-width="1.9"/></svg>
<div class="abs" style="left:1339.00px;top:642.60px;font-size:12px;color:#3c3c3c;white-space:nowrap;line-height:15px;transform-origin:0 0;transform:scaleX(0.8514);">C2</div>
<div class="cb" style="left:1317.2px;top:666.0px"></div>
<svg style="left:1316px;top:662.0px" width="16" height="16" viewBox="0 0 16 16"><path d="M4.2 10.2L6.9 13.1L14 3.4" fill="none" stroke="#ff8c0a" stroke-width="1.9"/></svg>
<div class="abs" style="left:1339.00px;top:664.60px;font-size:12px;color:#3c3c3c;white-space:nowrap;line-height:15px;transform-origin:0 0;transform:scaleX(0.8514);">C3</div>
<div class="abs" style="left:1296.80px;top:685.10px;font-size:12px;color:#3a3a3a;white-space:nowrap;line-height:15px;transform-origin:0 0;transform:scaleX(0.9688);font-weight:bold;">Reinforcements</div>
<div class="tri" style="left:1278.0px;top:690.5px"></div>
<div class="abs" style="left:1317.00px;top:707.10px;font-size:12px;color:#3a3a3a;white-space:nowrap;line-height:15px;transform-origin:0 0;transform:scaleX(0.9577);font-weight:bold;">Group of Bars</div>
<div class="tri" style="left:1298.0px;top:712.5px"></div>
<div class="cb" style="left:1317.2px;top:732.0px"></div>
<svg style="left:1316px;top:728.0px" width="16" height="16" viewBox="0 0 16 16"><path d="M4.2 10.2L6.9 13.1L14 3.4" fill="none" stroke="#ff8c0a" stroke-width="1.9"/></svg>
<div class="abs" style="left:1339.00px;top:730.60px;font-size:12px;color:#3c3c3c;white-space:nowrap;line-height:15px;transform-origin:0 0;transform:scaleX(0.8272);">GB1</div>
<div class="cb" style="left:1317.2px;top:754.0px"></div>
<svg style="left:1316px;top:750.0px" width="16" height="16" viewBox="0 0 16 16"><path d="M4.2 10.2L6.9 13.1L14 3.4" fill="none" stroke="#ff8c0a" stroke-width="1.9"/></svg>
<div class="abs" style="left:1339.00px;top:752.60px;font-size:12px;color:#3c3c3c;white-space:nowrap;line-height:15px;transform-origin:0 0;transform:scaleX(0.8646);">GB2</div>
<div class="cb" style="left:1317.2px;top:776.0px"></div>
<svg style="left:1316px;top:772.0px" width="16" height="16" viewBox="0 0 16 16"><path d="M4.2 10.2L6.9 13.1L14 3.4" fill="none" stroke="#ff8c0a" stroke-width="1.9"/></svg>
<div class="abs" style="left:1339.00px;top:774.60px;font-size:12px;color:#3c3c3c;white-space:nowrap;line-height:15px;transform-origin:0 0;transform:scaleX(0.8646);">GB3</div>
<div class="cb" style="left:1317.2px;top:798.0px"></div>
<svg style="left:1316px;top:794.0px" width="16" height="16" viewBox="0 0 16 16"><path d="M4.2 10.2L6.9 13.1L14 3.4" fill="none" stroke="#ff8c0a" stroke-width="1.9"/></svg>
<div class="abs" style="left:1339.00px;top:796.60px;font-size:12px;color:#3c3c3c;white-space:nowrap;line-height:15px;transform-origin:0 0;transform:scaleX(0.8646);">GB4</div>
<div class="abs" style="left:1317.00px;top:817.10px;font-size:12px;color:#3a3a3a;white-space:nowrap;line-height:15px;transform-origin:0 0;transform:scaleX(0.9491);font-weight:bold;">Wire Fabrics</div>
<div class="tri" style="left:1298.0px;top:822.5px"></div>
<div class="cb" style="left:1317.2px;top:842.0px"></div>
<svg style="left:1316px;top:838.0px" width="16" height="16" viewBox="0 0 16 16"><path d="M4.2 10.2L6.9 13.1L14 3.4" fill="none" stroke="#ff8c0a" stroke-width="1.9"/></svg>
<div class="abs" style="left:1339.00px;top:840.60px;font-size:12px;color:#3c3c3c;white-space:nowrap;line-height:15px;transform-origin:0 0;transform:scaleX(0.8472);">WF1</div>
<div class="abs" style="left:1317.00px;top:861.10px;font-size:12px;color:#3a3a3a;white-space:nowrap;line-height:15px;transform-origin:0 0;transform:scaleX(0.9586);font-weight:bold;">Inclined Rebars</div>
<div class="tri" style="left:1298.0px;top:866.5px"></div>
<div class="cb" style="left:1317.2px;top:886.0px"></div>
<svg style="left:1316px;top:882.0px" width="16" height="16" viewBox="0 0 16 16"><path d="M4.2 10.2L6.9 13.1L14 3.4" fill="none" stroke="#ff8c0a" stroke-width="1.9"/></svg>
<div class="abs" style="left:1339.00px;top:884.60px;font-size:12px;color:#3c3c3c;white-space:nowrap;line-height:15px;transform-origin:0 0;transform:scaleX(0.8085);">IB1</div>
<div class="cb" style="left:1317.2px;top:908.0px"></div>
<svg style="left:1316px;top:904.0px" width="16" height="16" viewBox="0 0 16 16"><path d="M4.2 10.2L6.9 13.1L14 3.4" fill="none" stroke="#ff8c0a" stroke-width="1.9"/></svg>
<div class="abs" style="left:1339.00px;top:906.60px;font-size:12px;color:#3c3c3c;white-space:nowrap;line-height:15px;transform-origin:0 0;transform:scaleX(0.8639);">IB2</div>
<div class="abs" style="left:1317.00px;top:927.10px;font-size:12px;color:#3a3a3a;white-space:nowrap;line-height:15px;transform-origin:0 0;transform:scaleX(0.9040);font-weight:bold;">Cages</div>
<div class="tri" style="left:1298.0px;top:932.5px"></div>
<div class="cb" style="left:1317.2px;top:952.0px"></div>
<svg style="left:1316px;top:948.0px" width="16" height="16" viewBox="0 0 16 16"><path d="M4.2 10.2L6.9 13.1L14 3.4" fill="none" stroke="#ff8c0a" stroke-width="1.9"/></svg>
<div class="abs" style="left:1339.00px;top:950.60px;font-size:12px;color:#3c3c3c;white-space:nowrap;line-height:15px;transform-origin:0 0;transform:scaleX(0.8414);">RO1</div>
<div class="abs" style="left:1440px;top:158px;width:6px;height:970px;background:#cbcbcb"></div>
<div class="abs" style="left:1446px;top:158px;width:474px;height:25px;background:#f26c21"></div>
<div class="abs" style="left:1465.90px;top:163.80px;font-size:12px;color:#fff;white-space:nowrap;line-height:15px;transform-origin:0 0;transform:scaleX(1.0134);">[ Loads/Combinations ]</div>
<div class="abs" style="left:1624.90px;top:163.80px;font-size:12px;color:#fff;white-space:nowrap;line-height:15px;transform-origin:0 0;transform:scaleX(0.9453);font-weight:bold;">New Load case</div>
<div class="abs" style="left:1727.10px;top:163.80px;font-size:12px;color:#fff;white-space:nowrap;line-height:15px;transform-origin:0 0;transform:scaleX(0.9722);font-weight:bold;">New Combination</div>
<div class="abs" style="left:1845.90px;top:163.80px;font-size:12px;color:#fff;white-space:nowrap;line-height:15px;transform-origin:0 0;transform:scaleX(1.0080);font-weight:bold;">Delete All</div>
<div id="status"><svg style="left:0;top:0" width="1920" height="32"><rect width="1920" height="32" filter="url(#brush)"/></svg><div class="tex"></div>
<span style="left:18px;color:#8c8c8c;font-weight:bold;transform-origin:0 0;transform:scaleX(0.965)">Design Code: <b style="color:#fff">EN</b></span>
<span style="left:138px;color:#8c8c8c;font-weight:bold">Rounding: <b style="color:#fff">Metric</b></span>
<span style="left:264px;color:#8c8c8c;font-weight:bold">Presentation Units: <b style="color:#fff">Metric</b></span>
<span style="left:1794px;top:10.7px;color:#e2651f;font-size:12px">www.<i style="font-style:normal;color:#fff">ideastatica</i> .com</span>
</div>
</body>
</html>
